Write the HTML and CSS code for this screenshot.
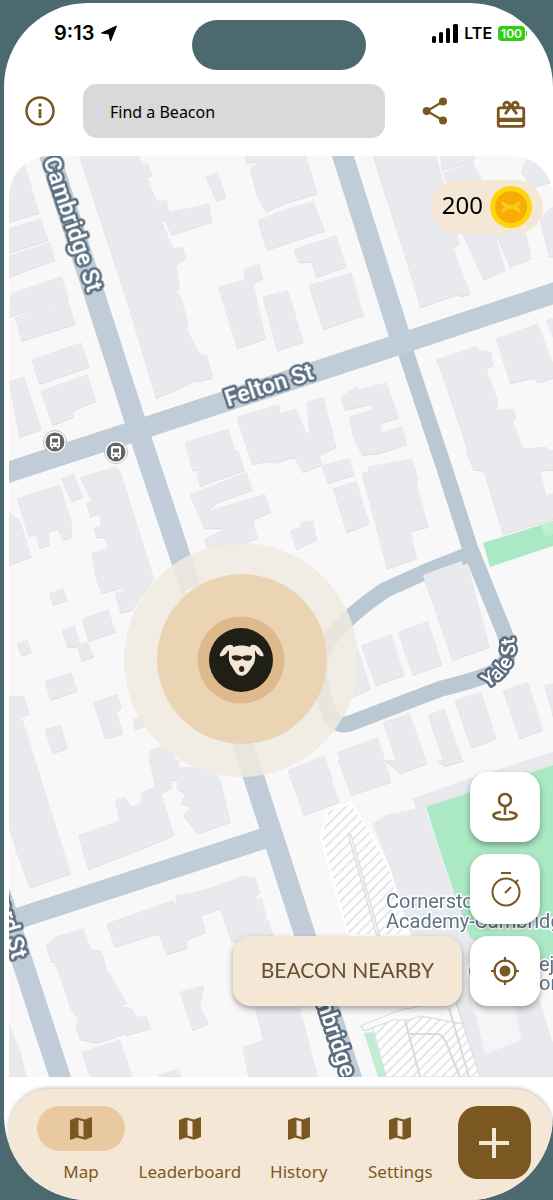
FILE: index.html
```html
<!DOCTYPE html>
<html lang="en">
<head>
    <meta charset="UTF-8">
    <meta name="viewport" content="width=device-width, initial-scale=1.0">
    <title>Beacon Map</title>
    <link rel="stylesheet" href="styles.css">
</head>
<body>
    <div class="phone">
        <header class="status-bar">
            <div class="status-left">
                <span class="time">9:13</span>
                <svg width="16" height="17" viewBox="0 0 16 17"><path d="M15.500 1 9.500 16 8 9 .5 8z" fill="#000" stroke="#000" stroke-linejoin="round"/></svg>
            </div>
            <div class="island"></div>
            <div class="status-right">
                <svg width="26" height="19" viewBox="0 0 26 19"><rect x="0" y="12" width="4" height="7" rx="1.500"/><rect x="7" y="8" width="4" height="11" rx="1.500"/><rect x="14" y="4" width="4" height="15" rx="1.500"/><rect x="21" y="0" width="5" height="19" rx="1.500"/></svg>
                <span class="network">LTE</span>
                <span class="battery">100</span>
            </div>
        </header>

        <div class="top-bar">
            <button class="icon-button" aria-label="Info">
                <svg width="30" height="30" viewBox="0 0 30 30"><circle cx="15" cy="15" r="13.500" fill="none" stroke="#7b5722" stroke-width="2.500"/><circle cx="15" cy="9" r="1.700" fill="#7b5722"/><path d="M15 13v9" stroke="#7b5722" stroke-width="2.800"/></svg>
            </button>
            <input class="search" type="text" placeholder="Find a Beacon" aria-label="Find a Beacon">
            <button class="icon-button share" aria-label="Share">
                <svg width="26" height="28" viewBox="0 0 26 28"><path d="M21 4.500 5 14l16 9.500" fill="none" stroke="#7b5722" stroke-width="2.200"/><g fill="#7b5722"><circle cx="21" cy="4.500" r="4"/><circle cx="4.700" cy="14" r="4"/><circle cx="21" cy="23.500" r="4"/></g></svg>
            </button>
            <button class="icon-button gift" aria-label="Rewards">
                <svg width="34" height="34" viewBox="0 0 24 24" fill="#7b5722"><path d="M20 6h-2.180c.11-.31.18-.65.18-1 0-1.660-1.340-3-3-3-1.050 0-1.960.54-2.500 1.350l-.5.67-.5-.68C10.960 2.540 10.050 2 9 2 7.340 2 6 3.340 6 5c0 .35.07.69.18 1H4c-1.110 0-1.990.89-1.990 2L2 19c0 1.110.89 2 2 2h16c1.110 0 2-.89 2-2V8c0-1.110-.89-2-2-2zm-5-2c.55 0 1 .45 1 1s-.45 1-1 1-1-.45-1-1 .45-1 1-1zM9 4c.55 0 1 .45 1 1s-.45 1-1 1-1-.45-1-1 .45-1 1-1zm11 15H4v-2h16v2zm0-5H4V8h5.080L7 10.830 8.620 12 11 8.760l1-1.360 1 1.360L15.380 12 17 10.830 14.920 8H20v6z"/></svg>
            </button>
        </div>

        <main class="map">
            <svg class="map-canvas" viewBox="9 156 544 921" preserveAspectRatio="xMinYMin slice">
                <defs>
                    <pattern id="hatch" width="7" height="7" patternUnits="userSpaceOnUse" patternTransform="rotate(-45)">
                        <rect width="7" height="7" fill="#fefefe"/>
                        <path d="M0 3H7" stroke="#d3d6da" stroke-width="1.200"/>
                    </pattern>
                    <path id="yale-path" d="M487 688Q518 670 515 644L512 618"/>
                    <g id="bus">
                        <circle r="11.500" fill="#fff" stroke="#b9bdc1"/>
                        <circle r="9.500" fill="#616366"/>
                        <path d="M-5-4q0-2 2-2h6q2 0 2 2v9h-1v1.500h-2V5h-4v1.500h-2V5h-1z" fill="#fff"/>
                        <path d="M-3-3.500h6v4h-6z" fill="#616366"/>
                        <circle cx="-2.500" cy="3" r="1" fill="#616366"/><circle cx="2.500" cy="3" r="1" fill="#616366"/>
                    </g>
                </defs>

                <!-- parks -->
                <g fill="#aae9c3">
                    <path d="M483 543 553 521V546L490 567z"/>
                    <path d="M541 525 553 521V534L545 537z" fill="#bfeed1"/>
                    <path d="M426 807 553 765V967L482 982z"/>
                </g>

                <!-- roads -->
                <g class="roads">
                    <path class="narrow" d="M400 335 445 470 470 548 504 632Q514 656 500 668 492 676 440 689L351 723Q338 728 331 716 322 695 320 680 316 658 330 638 352 612 385 590L425 572 468 555"/>
                    <path d="M48 150 138 430 181 559 254 778 305 935 353 1083"/>
                    <path d="M0 475 138 430 400 344 560 291"/>
                    <path d="M341 150 400 337"/>
                    <path d="M0 893 12 930 62 1083"/>
                    <path d="M10 921 265 838"/>
                </g>

                <!-- buildings, one group per map tile -->
                <g class="buildings">
                    <g transform="translate(0 150) scale(.3333)">
                        <path d="M27 90 72 35 118 188 27 216zM27 235 122 204 145 270 27 308zM27 318 150 275 166 330 27 380zM33 430 185 378 205 445 45 494 27 502zM45 500 205 449 226 522 65 573zM95 628 245 577 268 650 118 702zM122 722 262 673 288 752 218 782 222 800 158 826zM27 693 72 680 125 838 58 860z"/>
                        <path d="M238 18H418L424 38 445 42 458 75 442 80 470 152 500 150 508 185 628 160 636 215 515 255 495 208 485 212 520 295 550 290 558 322 528 345 540 412 528 418 545 445 563 515 562 540 572 560 600 610 622 615 640 682 590 695 585 690 545 712 468 745 385 465z"/>
                        <path d="M618 80 655 66 678 142 650 153zM735 18H840V165L800 185 772 140 750 55 778 35 738 38zM773 210 840 185V285L800 300zM655 410 735 388 733 355 778 342 790 385 760 400 798 565 712 595zM788 440 840 425V600H832zM555 875 685 836 725 960H578zM710 800 830 765 840 768V930L820 930 815 925 757 943z"/>
                    </g>
                    <g transform="translate(273 150) scale(.3333)">
                        <path d="M0 18H100L133 130 0 172zM0 190 122 152 155 242 0 293zM62 297 190 255 220 350 130 382 115 335 78 337zM107 405 235 367 273 495 150 538zM0 435 45 420 92 575 15 600 0 560z"/>
                        <path d="M300 18H490L560 280 540 292 592 430 570 438 550 435 442 472 422 400zM502 18H608L600 33 505 60zM510 65 600 38 640 110H525zM745 62 765 18 800 35 840 70V95L775 112zM567 245H665L697 360 632 388zM668 250H760L775 325 712 350zM798 200 840 170V320L828 318z"/>
                        <path d="M490 628 610 588 620 598 655 605 662 645 640 655 675 750 672 780 722 775 730 800 718 808 750 895 820 890 840 910V960H605L515 695zM670 565 795 520 840 640V683L795 697 783 683 712 700zM820 510 840 505V560z"/>
                        <path d="M202 740 250 708 262 718 340 697 378 802 322 820 325 845 388 828 403 882 320 910 268 915 240 855 228 800 298 778 295 762 215 780zM0 765 20 790 70 775 100 850 110 848 100 755 152 740 190 890 140 915 148 945 95 955 65 920 0 935zM150 945 225 925 238 960H150zM285 950 415 925 430 960H285z"/>
                    </g>
                    <g transform="translate(0 450) scale(.3333)">
                        <path d="M52 145 180 103 215 215V260L188 270 175 235 145 245 150 285 118 295 108 255 85 257zM183 85 222 70 248 140 215 153zM240 80 348 50 362 65 462 385 395 480 362 488 345 430 370 420 368 412 305 430 285 375 275 310 325 290 315 262 290 262 282 235 303 225 298 190 270 200 260 160 275 150zM27 185 60 210 95 320 27 345z"/>
                        <path d="M147 430 190 414 202 450 160 466zM247 505 325 478 347 545 265 573zM185 540 225 525 240 582 265 575 282 620 245 633 232 590 203 592zM50 580 82 568 95 605 65 617zM135 692 215 667 232 722 153 750zM280 755 352 732 365 770 350 785 370 850 316 866zM135 838 182 823 202 895 158 910zM27 738H72L88 790 65 800 125 990H27zM400 805 430 795 440 825 405 838z"/>
                        <path d="M450 900 500 885 540 950 640 955 660 990H465L447 930zM575 0H715L735 60 600 108zM570 132 740 65 757 120 648 158 625 182 795 132 812 185 760 210 773 265 740 275 700 300 620 290 615 265 678 235 613 235zM750 0H840V30L760 40z"/>
                    </g>
                    <g transform="translate(273 450) scale(.3333)">
                        <path d="M0 0H130L145 45 90 67 65 20 0 40zM147 48 230 25 243 75 165 100zM180 115 250 92 290 220 222 247zM267 68 415 25 435 85 430 98 467 230 412 243 432 325 342 355zM52 240 80 232 85 215 120 210 132 268 70 297zM580 0H840V50L802 62 820 135 840 130V208L690 252 630 55 600 57z"/>
                        <path d="M450 375 565 333 570 345 585 345 650 590 538 630zM265 585 355 552 395 675 308 705zM375 545 465 513 508 643 420 675zM240 740 293 715 250 580zM545 750 625 725 670 865 595 893zM465 795 515 775 567 925 517 947zM330 815 410 790 463 940 383 970zM193 905 315 862 355 990H220zM45 960 155 915 180 990H55zM690 720 765 695 810 840 740 865zM815 705 840 700V800z"/>
                    </g>
                    <g transform="translate(0 760) scale(.3333)">
                        <path d="M27 0H105L213 340 90 383 48 270 27 200zM235 225 360 180 345 120 375 110 395 140 420 130 425 95 465 80 450 0H540L515 30V80L485 100 523 225 430 265 400 275 265 328zM540 20 660 55 692 185 595 220 548 165 575 140 545 130 555 100 530 85z"/>
                        <path d="M320 490 520 420 530 440 528 405 585 395 640 380 730 347 768 352 780 395 757 418 785 415 800 470 780 485 805 480 820 525 695 545 660 445 605 465 618 515 560 540V565L500 583 475 520 345 560z"/>
                        <path d="M138 555 165 530 250 505 275 570 305 570 320 625 298 635 325 632 380 728 235 775 210 740 190 675 165 610 185 608 155 605zM235 777 360 735 395 745 410 770 440 768 452 805 380 825 375 820 290 848 240 838 228 800zM245 875 360 838 398 950H270zM540 695 612 675 600 740 627 790 578 810zM470 945 535 925 545 950zM27 790 60 870 80 950H27zM765 740H840V950H745L728 860 790 840z"/>
                    </g>
                    <g transform="translate(273 760) scale(.3333)">
                        <path d="M45 30 155 0 200 125 92 165zM195 0H335L355 65 235 105zM335 0H460L385 40zM490 0H580L515 18zM420 115 560 65 840-25V10L458 138 430 145z"/>
                        <path d="M300 190 340 165 455 140 590 530 790 690 840 850V950H590L500 740 415 520 345 300zM0 740H80L135 950H0z"/>
                    </g>
                </g>

                <!-- parking lots and school campus -->
                <path d="M470 993 513 1000 522 1040 485 1054z" fill="#f4f5f6"/>
                <path d="M328 810 351 803 373 837 390 870 408 935H348L321 837z" fill="url(#hatch)" stroke="#fff" stroke-width="2"/>
                <path d="M350 836 378 935" fill="none" stroke="#d7dade" stroke-width="4" stroke-linecap="round"/>
                <path d="M350 836 378 935" fill="none" stroke="#f0f1f3" stroke-width="2" stroke-linecap="round"/>
                <path d="M361 1027 393 1015 420 1012 442 1007 455 1000 480 1077H386L373 1028 364 1031z" fill="url(#hatch)" stroke="#d7dade"/>
                <path d="M361 1026 400 1010 455 1000 463 1024 442 1020 420 1016 410 1020 393 1020 364 1031z" fill="#fafafa" stroke="#d7dade"/>
                <path d="M405 1020 420 1077M409 1034H437Q443 1034 447 1045L460 1077M449 1008 469 1077" fill="none" stroke="#d7dade" stroke-width="2"/>
                <path d="M364 1033 373 1032 386 1077H378z" fill="#bfeed1"/>

                <g class="street-labels">
                    <text transform="translate(43 160) rotate(71.500)">Cambridge St</text>
                    <text transform="translate(228 407) rotate(-18)">Felton St</text>
                    <text transform="translate(306 971) rotate(71.500)">Cambridge St</text>
                    <text transform="translate(12 960) rotate(74)" text-anchor="end">Harvard St</text>
                    <text class="small"><textPath href="#yale-path">Yale St</textPath></text>
                </g>

                <g class="place-labels">
                    <text x="386" y="908">Cornerstone</text>
                    <text x="386" y="928">Academy-Cambridge</text>
                    <text x="539" y="971">eja</text>
                    <text x="539" y="990">on</text>
                </g>
                <circle cx="480" cy="971" r="12" fill="#708091" stroke="#fff" stroke-width="2"/>

                <use href="#bus" x="55" y="442"/>
                <use href="#bus" x="116" y="452"/>
                <circle cx="192" cy="594" r="7" fill="#fff" stroke="#c3c8cc"/>

                <!-- player -->
                <circle cx="241" cy="660" r="117" fill="#efebe0" fill-opacity=".84"/>
                <circle cx="242" cy="659" r="85" fill="#ead4b4"/>
                <circle cx="241" cy="660" r="43.500" fill="#deb98b"/>
                <circle cx="241" cy="660" r="32" fill="#1f1f16"/>
                <g transform="translate(190 610) scale(.3333)">
                    <path d="M117 130C115 114 122 111 132 111 142 105 168 105 178 111 190 111 197 114 195 130 197 148 194 160 187 168 179 178 173 197 155 197 138 197 133 180 125 168 118 160 115 148 117 130z" fill="#f5e7d5"/>
                    <path d="M127 108C116 103 104 112 95 127Q88 139 94 137 106 136 113 119L130 120zM183 108C194 103 206 112 215 127Q222 139 216 137 204 136 197 119L180 120z" fill="#f5e7d5" stroke="#f5e7d5" stroke-width="4" stroke-linejoin="round"/>
                    <path d="M125 138Q139 133 151 138L157 140 161 138Q173 133 186 138 187 153 172 152 160 152 157 144 153 152 139 152 125 151 125 138z" fill="#30231b"/>
                    <ellipse cx="155" cy="177" rx="8" ry="9" fill="#30231b"/>
                </g>
            </svg>

            <div class="coins">
                <span>200</span>
                <svg width="42" height="42" viewBox="0 0 42 42"><circle cx="21" cy="21" r="21" fill="#fcd60a"/><circle cx="21" cy="21" r="16" fill="#f6ac04"/><path d="M13 17Q16 21 21 21T29 17M13 25Q16 21 21 21T29 25" fill="none" stroke="#fcc91c" stroke-width="3.500" stroke-linecap="round"/></svg>
            </div>

            <div class="map-actions">
                <button class="beacon-nearby">BEACON NEARBY</button>
                <div class="map-tools">
                    <button class="tool" aria-label="Drop beacon">
                        <svg width="30" height="30" viewBox="0 0 30 30" fill="none" stroke="#7b5722" stroke-width="2.600"><circle cx="15" cy="8" r="6"/><path d="M15 14v9M11 20C-1 21 2 27.500 15 27.500S31 21 19 20"/></svg>
                    </button>
                    <button class="tool" aria-label="Timer">
                        <svg width="32" height="36" viewBox="0 0 32 36" fill="none" stroke="#7b5722" stroke-width="2"><circle cx="17" cy="21" r="13.500"/><path d="M12 2h10M16 22l6-6M26 12l3-3"/></svg>
                    </button>
                    <button class="tool" aria-label="My location">
                        <svg width="30" height="30" viewBox="0 0 30 30" fill="none" stroke="#7b5722" stroke-width="2.200"><circle cx="15" cy="15" r="10.500"/><circle cx="15" cy="15" r="5.500" fill="#7b5722" stroke="none"/><path d="M15 1v5M15 24v5M1 15h5M24 15h5"/></svg>
                    </button>
                </div>
            </div>
        </main>

        <nav class="bottom-nav">
            <a class="nav-item active" href="#map">
                <span class="nav-icon"><svg width="22" height="23" viewBox="0 0 22 23"><path fill="#7b5722" fill-rule="evenodd" d="M0 3 7 .5 15 2.500 21 .3Q22 0 22 1V20L15 22.800 7 20.500 1 22.700Q0 23 0 22zM8.500 3V18.500L13.500 20V4.500z"/></svg></span>
                Map
            </a>
            <a class="nav-item" href="#leaderboard">
                <span class="nav-icon"><svg width="22" height="23" viewBox="0 0 22 23"><path fill="#7b5722" fill-rule="evenodd" d="M0 3 7 .5 15 2.500 21 .3Q22 0 22 1V20L15 22.800 7 20.500 1 22.700Q0 23 0 22zM8.500 3V18.500L13.500 20V4.500z"/></svg></span>
                Leaderboard
            </a>
            <a class="nav-item" href="#history">
                <span class="nav-icon"><svg width="22" height="23" viewBox="0 0 22 23"><path fill="#7b5722" fill-rule="evenodd" d="M0 3 7 .5 15 2.500 21 .3Q22 0 22 1V20L15 22.800 7 20.500 1 22.700Q0 23 0 22zM8.500 3V18.500L13.500 20V4.500z"/></svg></span>
                History
            </a>
            <a class="nav-item" href="#settings">
                <span class="nav-icon"><svg width="22" height="23" viewBox="0 0 22 23"><path fill="#7b5722" fill-rule="evenodd" d="M0 3 7 .5 15 2.500 21 .3Q22 0 22 1V20L15 22.800 7 20.500 1 22.700Q0 23 0 22zM8.500 3V18.500L13.500 20V4.500z"/></svg></span>
                Settings
            </a>
            <button class="add-button" aria-label="Add beacon">
                <svg width="30" height="30" viewBox="0 0 30 30"><path d="M15 0v30M0 15h30" stroke="#f5e7d5" stroke-width="4"/></svg>
            </button>
        </nav>
    </div>
</body>
</html>
```

FILE: styles.css
```css
* {
    box-sizing: border-box;
}
body {
    margin: 0;
    min-height: 100vh;
    padding: 3px 0 0 4px;
    display: flex;
    background: #4d6970;
    font-family: "Noto Sans", sans-serif;
    color: #000;
}
button {
    border: none;
    padding: 0;
    cursor: pointer;
    display: flex;
    align-items: center;
    justify-content: center;
}
svg {
    display: block;
}
.phone {
    flex: 1;
    min-width: 0;
    display: flex;
    flex-direction: column;
    background: #fff;
    border-radius: 84px;
    overflow: hidden;
}
.status-bar {
    display: grid;
    grid-template-columns: 1fr 174px 1fr;
    height: 68px;
    padding-top: 17px;
    font-family: Inter, sans-serif;
    font-weight: 600;
}
.status-left, .status-right {
    display: flex;
    align-items: center;
    height: 26px;
}
.status-left {
    padding-left: 50px;
    gap: 7px;
}
.status-right {
    justify-content: flex-end;
    padding-right: 28px;
    gap: 6px;
}
.time {
    font-size: 20px;
}
.network {
    font-size: 16px;
}
.island {
    height: 50px;
    border-radius: 25px;
    background: #4d6970;
}
.battery {
    position: relative;
    padding: 0 3px;
    border-radius: 4px;
    background: #2fd012;
    color: #fff;
    font-size: 12px;
    line-height: 15px;
}
.battery::after {
    content: "";
    position: absolute;
    right: -2px;
    top: 5px;
    width: 1px;
    height: 5px;
    background: #2fd012;
}
.top-bar {
    display: flex;
    align-items: center;
    height: 67px;
    margin: 13px 0 5px;
    padding: 0 25px 14px 21px;
}
.icon-button {
    background: none;
    flex-shrink: 0;
}
.search {
    flex: 1;
    min-width: 0;
    height: 54px;
    margin: 0 37px 0 28px;
    padding: 2px 27px 0;
    border: none;
    border-radius: 14px;
    background: #d9d9d9;
    font-family: inherit;
    font-size: 16px;
}
.search::placeholder {
    color: #000;
    opacity: 1;
}
.gift {
    margin-left: 46px;
    padding-top: 8px;
}
.map {
    position: relative;
    flex: 1;
    min-height: 600px;
    margin-left: 5px;
    border-radius: 40px 40px 0 0;
    overflow: hidden;
    background: #f8f8f8;
}
.map-canvas {
    position: absolute;
    width: 100%;
    height: 100%;
}
.roads path {
    fill: none;
    stroke: #c0cdd9;
    stroke-width: 21px;
    stroke-linejoin: round;
}
.roads .narrow {
    stroke: #bac8d4;
    stroke-width: 16px;
}
.buildings {
    fill: #e8eaed;
    filter: drop-shadow(0 1px 0 #dcdfe2);
}
.street-labels {
    font-family: Roboto, sans-serif;
    font-size: 23px;
    font-weight: 600;
    fill: #fff;
    stroke: #5a6e7f;
    stroke-width: 5px;
    stroke-linejoin: round;
    paint-order: stroke;
}
.street-labels .small {
    font-size: 20px;
}
.place-labels {
    font-family: Roboto, sans-serif;
    font-size: 20px;
    fill: #5f7387;
    stroke: #fff;
    stroke-width: 3px;
    paint-order: stroke;
}
.coins {
    position: absolute;
    top: 24px;
    right: 10px;
    height: 54px;
    padding: 0 11px;
    border-radius: 27px;
    display: flex;
    align-items: center;
    gap: 7px;
    background: #f5e7d5;
    font-size: 24px;
    line-height: 24px;
}
.coins span {
    padding-bottom: 4px;
}
.map-actions {
    position: absolute;
    right: 13px;
    bottom: 71px;
    display: flex;
    align-items: flex-end;
    gap: 8px;
}
.map-tools {
    display: flex;
    flex-direction: column;
    gap: 12px;
}
.tool, .beacon-nearby {
    height: 70px;
    border-radius: 18px;
    box-shadow: 0 3px 6px rgba(0, 0, 0, 0.35);
}
.tool {
    width: 70px;
    background: #fff;
}
.beacon-nearby {
    padding: 0 28px 4px;
    background: #f5e7d5;
    color: #65502f;
    font-family: Lato, sans-serif;
    font-size: 21px;
}
.bottom-nav {
    display: flex;
    justify-content: space-between;
    gap: 8px;
    height: 111px;
    margin: 12px 0 0 5px;
    padding: 17px 22px 0 28px;
    border-radius: 40px 40px 0 0;
    background: #f5e7d5;
    box-shadow: 0 -1px 4px rgba(0, 0, 0, 0.25);
}
.nav-item {
    display: flex;
    flex-direction: column;
    align-items: center;
    gap: 9px;
    min-width: 88px;
    color: #7b5722;
    font-size: 17px;
    line-height: 24px;
    text-decoration: none;
}
.nav-icon {
    display: flex;
    align-items: center;
    justify-content: center;
    width: 88px;
    height: 45px;
    border-radius: 23px;
}
.active .nav-icon {
    background: #e8c9a0;
}
.add-button {
    flex-shrink: 0;
    width: 73px;
    height: 73px;
    border-radius: 20px;
    background: #7b5722;
}
```
